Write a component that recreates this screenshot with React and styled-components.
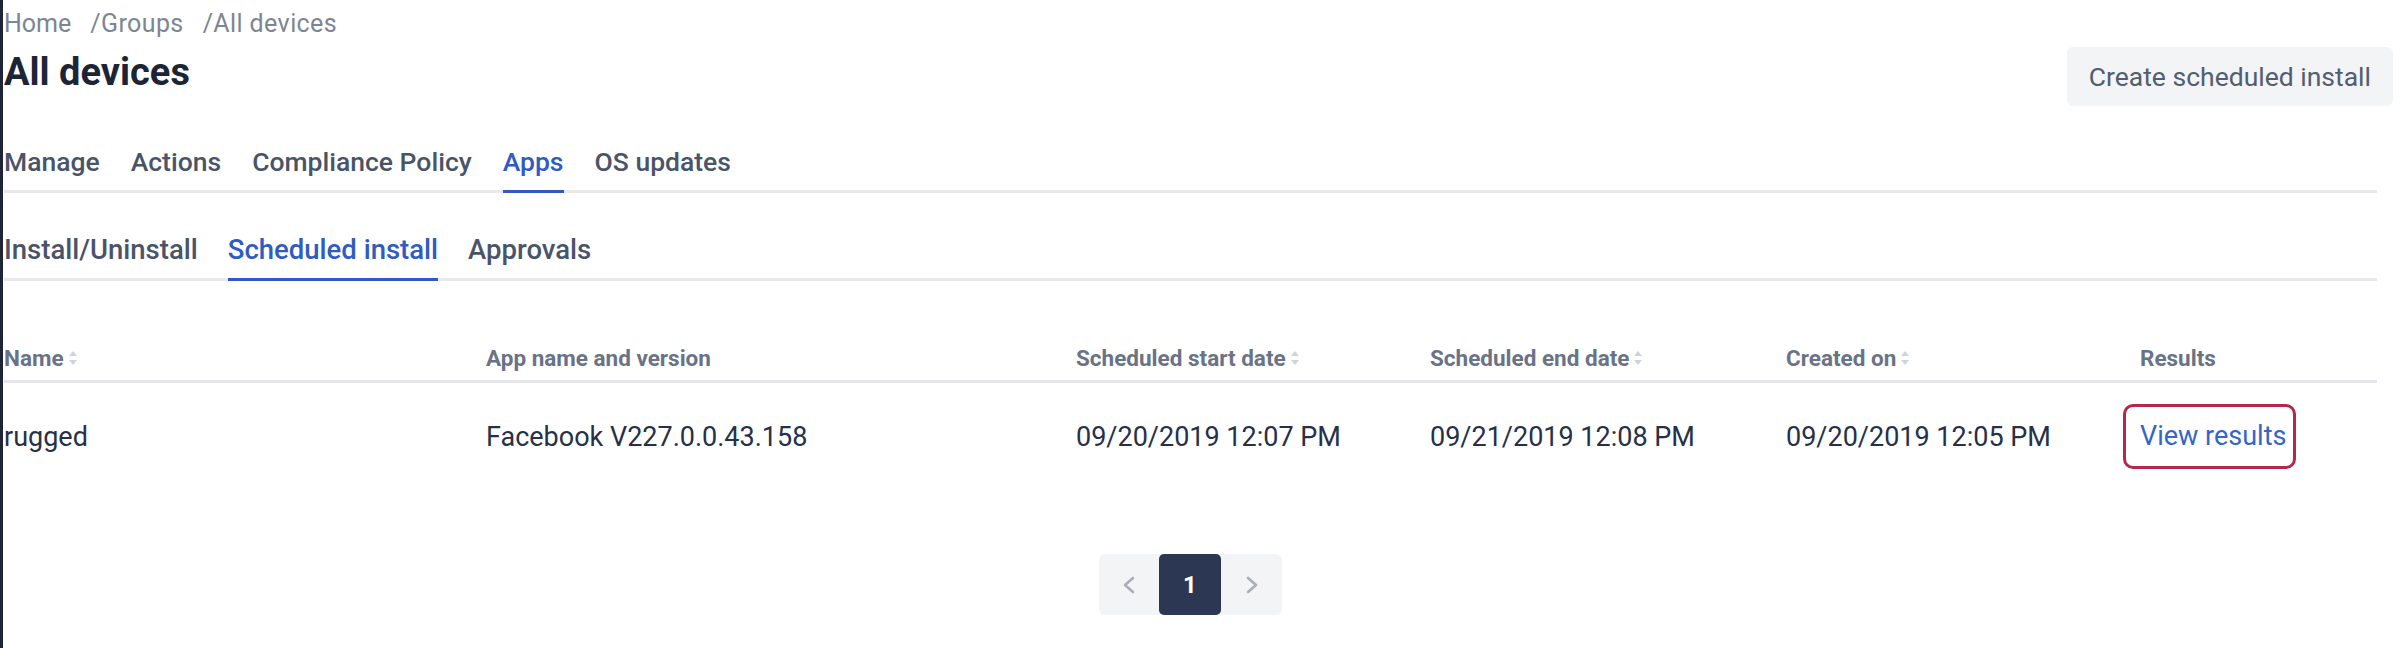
import React from 'react'
import styled, { createGlobalStyle } from 'styled-components'

const GlobalStyle = createGlobalStyle`
    body {
        margin: 0;
        background: #ffffff;
        font-family: Roboto, "Liberation Sans", sans-serif;
    }
`

const Page = styled.div`
    min-height: 648px;
    box-sizing: border-box;
    border-left: 3px solid #1d2537;
    padding: 9px 11px 0 1px;
`

const Header = styled.header`
    display: flex;
    justify-content: space-between;
    align-items: flex-start;
`

const Breadcrumb = styled.nav`
    display: flex;
    font-size: 25px;
    line-height: 30px;
    color: #7d8594;
`

const Crumb = styled.span`
    margin-left: ${ p => p.$first ? 0 : 19 }px;
    letter-spacing: ${ p => p.$first ? 0 : 0.4 }px;
`

const Title = styled.h1`
    margin: 10px 0 0;
    font-size: 38px;
    line-height: 46px;
    font-weight: 700;
    color: #1c2536;
`

const CreateButton = styled.button`
    margin-top: 38px;
    height: 59px;
    padding: 0 22px;
    border: none;
    border-radius: 6px;
    background: #f3f4f6;
    color: #525d70;
    font-family: inherit;
    font-size: 26.5px;
`

const TabBar = styled.div`
    display: flex;
    gap: ${ p => p.$gap }px;
    margin: ${ p => p.$top }px 16px 0 0;
    border-bottom: 3px solid #e7e9ed;
`

const Tab = styled.span`
    font-size: ${ p => p.$size }px;
    line-height: 30px;
    font-weight: 500;
    padding-bottom: 13px;
    margin-bottom: -3px;
    color: ${ p => p.$active ? '#2f5bc3' : '#4a5468' };
    border-bottom: 3px solid ${ p => p.$active ? '#3158c4' : 'transparent' };
`

const Table = styled.div`
    margin: 64px 16px 0 0;
`

const Row = styled.div`
    display: grid;
    grid-template-columns: 482px 590px 354px 356px 354px 1fr;
    align-items: center;
    padding: ${ p => p.$head ? '0 0 9px' : '21px 0' };
    border-bottom: ${ p => p.$head ? '3px solid #e5e7eb' : 'none' };
`

const HeadCell = styled.div`
    display: flex;
    align-items: center;
    gap: 4px;
    font-size: 22.5px;
    line-height: 26px;
    font-weight: 700;
    color: #6a7386;
`

const Cell = styled.div`
    font-size: 27px;
    line-height: 32px;
    color: #263148;
`

const ResultLink = styled.a`
    display: inline-block;
    margin-left: -17px;
    padding: 13px 7px 14px 14px;
    border: 3px solid #b3294d;
    border-radius: 10px;
    font-size: 27px;
    line-height: 32px;
    color: #3664c8;
    text-decoration: none;
`

const PagerWrap = styled.div`
    display: flex;
    justify-content: center;
    margin: 64px 16px 0 0;
`

const Pager = styled.div`
    display: flex;
    background: #f3f4f6;
    border-radius: 6px;
`

const PageButton = styled.span`
    display: flex;
    align-items: center;
    justify-content: center;
    width: ${ p => p.$w }px;
    height: 61px;
    border-radius: 5px;
    background: ${ p => p.$active ? '#2b3753' : 'transparent' };
    color: #ffffff;
    font-size: 24px;
    font-weight: 700;
`

const SortIcon = () => (
    <svg width="10" height="18" viewBox="0 0 10 18">
        <path d="M5 2 L9 7 L1 7 Z" fill="#cfd3da" />
        <path d="M1 11 L9 11 L5 16 Z" fill="#cfd3da" />
    </svg>
)

const Chevron = ({ dir }) => (
    <svg width="14" height="18" viewBox="0 0 14 18">
        <polyline
            points={ dir === 'left' ? '11,2 3,9 11,16' : '3,2 11,9 3,16' }
            fill="none"
            stroke="#a8aebb"
            strokeWidth="2.6"
            strokeLinecap="round"
            strokeLinejoin="round"
        />
    </svg>
)

const columns = [
    { label: 'Name', sort: true },
    { label: 'App name and version' },
    { label: 'Scheduled start date', sort: true },
    { label: 'Scheduled end date', sort: true },
    { label: 'Created on', sort: true },
    { label: 'Results' },
]

const rows = [
    {
        name: 'rugged',
        app: 'Facebook V227.0.0.43.158',
        start: '09/20/2019 12:07 PM',
        end: '09/21/2019 12:08 PM',
        created: '09/20/2019 12:05 PM',
    },
]

export default () => {

    return (
        <Page>
            <GlobalStyle />
            <Header>
                <div>
                    <Breadcrumb>
                        <Crumb $first>Home</Crumb>
                        <Crumb>/Groups</Crumb>
                        <Crumb>/All devices</Crumb>
                    </Breadcrumb>
                    <Title>All devices</Title>
                </div>
                <CreateButton type="button">Create scheduled install</CreateButton>
            </Header>

            <TabBar $top={ 41 } $gap={ 31 }>
                <Tab $size={ 26.5 }>Manage</Tab>
                <Tab $size={ 26.5 }>Actions</Tab>
                <Tab $size={ 26.5 }>Compliance Policy</Tab>
                <Tab $size={ 26.5 } $active>Apps</Tab>
                <Tab $size={ 26.5 }>OS updates</Tab>
            </TabBar>

            <TabBar $top={ 42 } $gap={ 30 }>
                <Tab $size={ 27.5 }>Install/Uninstall</Tab>
                <Tab $size={ 27.5 } $active>Scheduled install</Tab>
                <Tab $size={ 27.5 }>Approvals</Tab>
            </TabBar>

            <Table>
                <Row $head>
                    { columns.map( col => (
                        <HeadCell key={ col.label }>
                            { col.label }
                            { col.sort && <SortIcon /> }
                        </HeadCell>
                    ) ) }
                </Row>
                { rows.map( r => (
                    <Row key={ r.name }>
                        <Cell>{ r.name }</Cell>
                        <Cell>{ r.app }</Cell>
                        <Cell>{ r.start }</Cell>
                        <Cell>{ r.end }</Cell>
                        <Cell>{ r.created }</Cell>
                        <Cell><ResultLink href="#">View results</ResultLink></Cell>
                    </Row>
                ) ) }
            </Table>

            <PagerWrap>
                <Pager>
                    <PageButton $w={ 60 }><Chevron dir="left" /></PageButton>
                    <PageButton $w={ 62 } $active>1</PageButton>
                    <PageButton $w={ 61 }><Chevron dir="right" /></PageButton>
                </Pager>
            </PagerWrap>
        </Page>
    )

}
